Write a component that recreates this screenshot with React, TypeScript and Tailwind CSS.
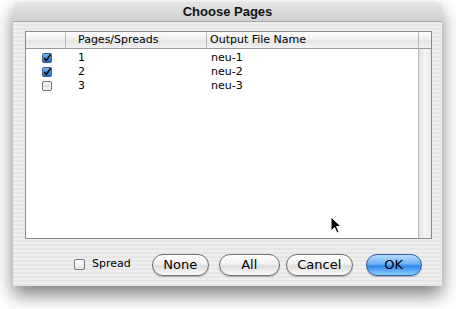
import React from 'react';

const rows = [
  { page: '1', file: 'neu-1', on: true },
  { page: '2', file: 'neu-2', on: true },
  { page: '3', file: 'neu-3', on: false },
];

function Check({ on }: { on: boolean }) {
  if (on) {
    return (
      <svg width="10" height="10" viewBox="0 0 10 10">
        <defs>
          <linearGradient id="cb" x1="0" y1="0" x2="0" y2="1">
            <stop offset="0" stopColor="#7fb6f0" />
            <stop offset="1" stopColor="#1d64c8" />
          </linearGradient>
        </defs>
        <rect x="0.5" y="0.5" width="9" height="9" rx="1" fill="url(#cb)" stroke="#3a5f95" />
        <path d="M2.2 5 L4.3 7.4 L8.6 1.2" fill="none" stroke="#111" strokeWidth="1.6" />
      </svg>
    );
  }
  return (
    <svg width="10" height="10" viewBox="0 0 10 10">
      <rect x="0.5" y="0.5" width="9" height="9" rx="1.5" fill="#f2f2f2" stroke="#777" />
      <rect x="1.5" y="4.5" width="7" height="1" fill="#d0d0d0" />
    </svg>
  );
}

function Btn({ label, w, primary }: { label: string; w: string; primary?: boolean }) {
  return (
    <div
      className={`${w} h-[22px] rounded-full flex items-center justify-center text-[13px] text-black ${
        primary
          ? 'border border-[#2c5aa8] bg-[linear-gradient(#b9dcff,#6eb1f5_45%,#2f86ea_55%,#8cd0ff)]'
          : 'border border-[#6e6e6e] bg-[linear-gradient(#ffffff,#f1f1f1_45%,#dcdcdc_55%,#fbfbfb)]'
      } shadow-[0_1px_1px_rgba(0,0,0,0.25)]`}
    >
      {label}
    </div>
  );
}

export default function App() {
  return (
    <div
      className="relative w-[456px] h-[309px] bg-white overflow-hidden pt-[2px] pl-[13px]"
      style={{ fontFamily: '"DejaVu Sans", "Liberation Sans", sans-serif' }}
    >
      <div className="w-[429px] h-[284px] rounded-t-[6px] overflow-hidden flex flex-col shadow-[0_9px_18px_rgba(0,0,0,0.5)] bg-[repeating-linear-gradient(#eeeeee_0px,#eeeeee_2px,#e6e6e6_2px,#e6e6e6_4px)]">
        {/* Title bar */}
        <div className="h-[20px] flex items-center justify-center bg-[linear-gradient(#e6e6e6,#cfcfcf)] border-b border-[#a8a8a8]">
          <span
            className="text-[13px] font-bold text-[#111]"
            style={{ fontFamily: '"Liberation Sans", sans-serif' }}
          >
            Choose Pages
          </span>
        </div>

        {/* Table */}
        <div className="ml-[12px] mt-[9px] w-[407px] h-[208px] border border-[#8a8a8a] bg-white flex">
          <div className="flex-1 flex flex-col">
            <div className="h-[17px] flex text-[11px] text-black bg-[linear-gradient(#ffffff,#ececec_50%,#e4e4e4_50%,#f2f2f2)] border-b border-[#9a9a9a]">
              <div className="w-[40px] border-r border-[#b4b4b4]" />
              <div className="w-[141px] pl-[12px] border-r border-[#b4b4b4] flex items-center">Pages/Spreads</div>
              <div className="flex-1 pl-[3px] flex items-center">Output File Name</div>
            </div>
            <div className="pt-[2px]">
              {rows.map((r) => (
                <div key={r.page} className="h-[14px] flex items-center text-[11px] text-black">
                  <div className="w-[40px] pl-[16px] flex items-center">
                    <Check on={r.on} />
                  </div>
                  <div className="w-[141px] pl-[12px]">{r.page}</div>
                  <div className="flex-1 pl-[4px]">{r.file}</div>
                </div>
              ))}
            </div>
          </div>
          <div className="w-[13px] border-l border-[#b4b4b4] flex flex-col">
            <div className="h-[17px] border-b border-[#9a9a9a] bg-[linear-gradient(#ffffff,#ececec_50%,#e4e4e4_50%,#f2f2f2)]" />
            <div className="flex-1 bg-[linear-gradient(90deg,#e2e2e2,#f6f6f6_50%,#e8e8e8)]" />
          </div>
        </div>

        {/* Bottom row */}
        <div className="mt-[14px] flex items-center h-[23px]">
          <div className="ml-[61px] flex items-center gap-[7px]">
            <div className="w-[11px] h-[11px] rounded-[2px] border border-[#777] bg-[linear-gradient(#ffffff,#e4e4e4)]" />
            <span className="text-[11px] text-black">Spread</span>
          </div>
          <div className="ml-[21px] flex items-center">
            <Btn label="None" w="w-[57px]" />
            <div className="w-[10px]" />
            <Btn label="All" w="w-[61px]" />
            <div className="w-[6px]" />
            <Btn label="Cancel" w="w-[67px]" />
            <div className="w-[13px]" />
            <Btn label="OK" w="w-[56px]" primary />
          </div>
        </div>
      </div>
      {/* cursor */}
      <svg className="absolute left-[330px] top-[216px]" width="12" height="18" viewBox="0 0 12 18">
        <path d="M1 1 L1 15 L4.5 11.5 L7 17 L9 16 L6.5 10.5 L11 10.5 Z" fill="#000" stroke="#fff" strokeWidth="1" />
      </svg>
    </div>
  );
}
